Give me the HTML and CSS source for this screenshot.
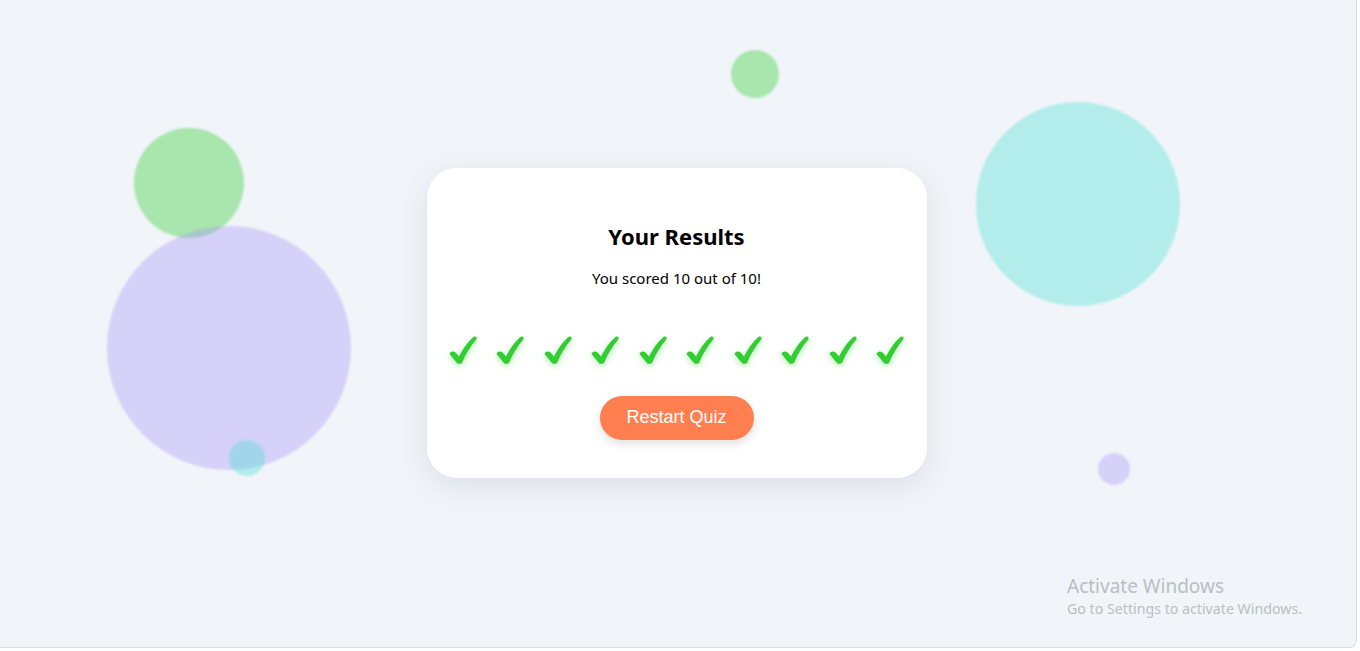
FILE: index.html
```html
<!DOCTYPE html>
<html lang="en">
<head>
<meta charset="utf-8">
<title>Quiz Results</title>
<link rel="stylesheet" href="styles.css">
</head>
<body>
<div class="frame">
  <div class="bubbles" aria-hidden="true">
    <span class="bubble b-green-lg"></span>
    <span class="bubble b-purple-lg"></span>
    <span class="bubble b-cyan-sm"></span>
    <span class="bubble b-green-sm"></span>
    <span class="bubble b-teal-lg"></span>
    <span class="bubble b-purple-sm"></span>
  </div>

  <main class="card">
    <h2 class="title">Your Results</h2>
    <p class="score">You scored 10 out of 10!</p>
    <div class="checks">
      <svg class="check" viewBox="0 0 28 28"><path d="M0.5 18 C1 15.5 4.5 14.5 6.5 16.5 L10 20.5 C14 12.5 19 5.5 24.5 1 C26.5 -0.3 28.5 1.5 27.2 3.5 C21.5 10.5 16.5 18 13.5 26 C12.5 28.3 8.8 28.5 7.6 26.4 Z"/></svg>
      <svg class="check" viewBox="0 0 28 28"><path d="M0.5 18 C1 15.5 4.5 14.5 6.5 16.5 L10 20.5 C14 12.5 19 5.5 24.5 1 C26.5 -0.3 28.5 1.5 27.2 3.5 C21.5 10.5 16.5 18 13.5 26 C12.5 28.3 8.8 28.5 7.6 26.4 Z"/></svg>
      <svg class="check" viewBox="0 0 28 28"><path d="M0.5 18 C1 15.5 4.5 14.5 6.5 16.5 L10 20.5 C14 12.5 19 5.5 24.5 1 C26.5 -0.3 28.5 1.5 27.2 3.5 C21.5 10.5 16.5 18 13.5 26 C12.5 28.3 8.8 28.5 7.6 26.4 Z"/></svg>
      <svg class="check" viewBox="0 0 28 28"><path d="M0.5 18 C1 15.5 4.5 14.5 6.5 16.5 L10 20.5 C14 12.5 19 5.5 24.5 1 C26.5 -0.3 28.5 1.5 27.2 3.5 C21.5 10.5 16.5 18 13.5 26 C12.5 28.3 8.8 28.5 7.6 26.4 Z"/></svg>
      <svg class="check" viewBox="0 0 28 28"><path d="M0.5 18 C1 15.5 4.5 14.5 6.5 16.5 L10 20.5 C14 12.5 19 5.5 24.5 1 C26.5 -0.3 28.5 1.5 27.2 3.5 C21.5 10.5 16.5 18 13.5 26 C12.5 28.3 8.8 28.5 7.6 26.4 Z"/></svg>
      <svg class="check" viewBox="0 0 28 28"><path d="M0.5 18 C1 15.5 4.5 14.5 6.5 16.5 L10 20.5 C14 12.5 19 5.5 24.5 1 C26.5 -0.3 28.5 1.5 27.2 3.5 C21.5 10.5 16.5 18 13.5 26 C12.5 28.3 8.8 28.5 7.6 26.4 Z"/></svg>
      <svg class="check" viewBox="0 0 28 28"><path d="M0.5 18 C1 15.5 4.5 14.5 6.5 16.5 L10 20.5 C14 12.5 19 5.5 24.5 1 C26.5 -0.3 28.5 1.5 27.2 3.5 C21.5 10.5 16.5 18 13.5 26 C12.5 28.3 8.8 28.5 7.6 26.4 Z"/></svg>
      <svg class="check" viewBox="0 0 28 28"><path d="M0.5 18 C1 15.5 4.5 14.5 6.5 16.5 L10 20.5 C14 12.5 19 5.5 24.5 1 C26.5 -0.3 28.5 1.5 27.2 3.5 C21.5 10.5 16.5 18 13.5 26 C12.5 28.3 8.8 28.5 7.6 26.4 Z"/></svg>
      <svg class="check" viewBox="0 0 28 28"><path d="M0.5 18 C1 15.5 4.5 14.5 6.5 16.5 L10 20.5 C14 12.5 19 5.5 24.5 1 C26.5 -0.3 28.5 1.5 27.2 3.5 C21.5 10.5 16.5 18 13.5 26 C12.5 28.3 8.8 28.5 7.6 26.4 Z"/></svg>
      <svg class="check" viewBox="0 0 28 28"><path d="M0.5 18 C1 15.5 4.5 14.5 6.5 16.5 L10 20.5 C14 12.5 19 5.5 24.5 1 C26.5 -0.3 28.5 1.5 27.2 3.5 C21.5 10.5 16.5 18 13.5 26 C12.5 28.3 8.8 28.5 7.6 26.4 Z"/></svg>
    </div>
    <button class="restart" type="button">Restart Quiz</button>
  </main>

  <div class="activate">
    <div class="activate-title">Activate Windows</div>
    <div class="activate-sub">Go to Settings to activate Windows.</div>
  </div>
</div>
</body>
</html>
```

FILE: styles.css
```css
* { box-sizing: border-box; }

html, body {
  margin: 0;
  padding: 0;
  width: 1360px;
  height: 651px;
  overflow: hidden;
  background: #ffffff;
  font-family: "Noto Sans", "Open Sans", sans-serif;
}

.frame {
  position: relative;
  width: 1357px;
  height: 648px;
  background: #f1f5f9;
  border-right: 1px solid #d9dcdf;
  border-bottom: 1px solid #d9dcdf;
  border-bottom-right-radius: 8px;
  display: flex;
  align-items: center;
  justify-content: center;
  overflow: hidden;
}

.bubbles {
  position: absolute;
  inset: 0;
}

.bubble {
  position: absolute;
  border-radius: 50%;
  filter: blur(1px);
}

.b-green-lg { left: 134px; top: 128px; width: 110px; height: 110px; background: rgba(50, 205, 50, 0.38); }
.b-purple-lg { left: 107px; top: 226px; width: 244px; height: 244px; background: rgba(170, 150, 246, 0.38); }
.b-cyan-sm { left: 229px; top: 440px; width: 36px; height: 36px; background: rgba(64, 224, 208, 0.35); }
.b-green-sm { left: 731px; top: 50px; width: 48px; height: 48px; background: rgba(50, 205, 50, 0.38); }
.b-teal-lg { left: 976px; top: 102px; width: 204px; height: 204px; background: rgba(64, 224, 208, 0.35); }
.b-purple-sm { left: 1098px; top: 453px; width: 32px; height: 32px; background: rgba(170, 150, 246, 0.38); }

.card {
  position: relative;
  width: 500px;
  height: 310px;
  margin: -2px 0 0 -3px;
  background: #ffffff;
  border-radius: 30px;
  box-shadow: 0 8px 30px rgba(30, 40, 80, 0.10);
  padding: 53px 20px 38px;
  display: flex;
  flex-direction: column;
  align-items: center;
  text-align: center;
}

.title {
  margin: 0;
  height: 30px;
  line-height: 30px;
  font-size: 22px;
  font-weight: 700;
  color: #000;
}

.score {
  margin: 17px 0 0;
  height: 20px;
  line-height: 20px;
  font-size: 15px;
  color: #000;
}

.checks {
  margin-top: 46px;
  height: 32px;
  display: flex;
  align-items: center;
  gap: 19.5px;
}

.check {
  width: 28px;
  height: 28px;
  fill: #33cc33;
  filter: drop-shadow(0 2px 3px rgba(60, 220, 60, 0.45));
}

.restart {
  margin-top: 30px;
  width: 154px;
  height: 44px;
  border: none;
  border-radius: 22px;
  background: #ff7f50;
  color: #ffffff;
  font-family: "Liberation Sans", Arial, sans-serif;
  font-size: 18px;
  box-shadow: 0 4px 10px rgba(0, 0, 0, 0.12);
  cursor: pointer;
}

.activate {
  position: absolute;
  left: 1067px;
  top: 574px;
  color: #b9bec3;
  font-family: "Noto Sans", "Open Sans", sans-serif;
}

.activate-title {
  font-size: 19px;
  line-height: 25px;
}

.activate-sub {
  font-size: 14.2px;
  line-height: 20px;
}
```
